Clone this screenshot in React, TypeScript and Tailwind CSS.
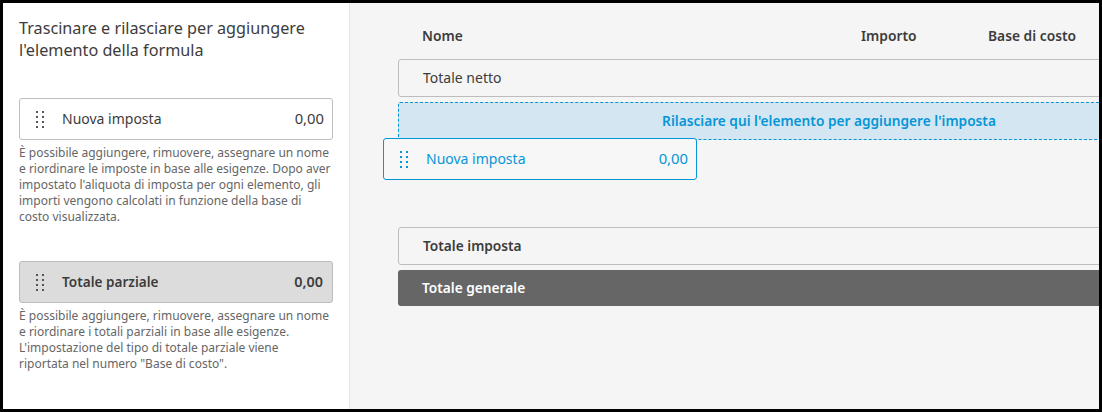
const font = "font-['Noto_Sans','Open_Sans',sans-serif]";

const Grip = ({ className }: { className: string }) => (
  <svg width="9" height="17" viewBox="0 0 9 17" className={className} fill="currentColor">
    <rect x="0" y="0" width="2" height="2" />
    <rect x="6" y="0" width="2" height="2" />
    <rect x="0" y="5" width="2" height="2" />
    <rect x="6" y="5" width="2" height="2" />
    <rect x="0" y="10" width="2" height="2" />
    <rect x="6" y="10" width="2" height="2" />
    <rect x="0" y="15" width="2" height="2" />
    <rect x="6" y="15" width="2" height="2" />
  </svg>
);

const App = () => {
  return (
    <div className={`${font} flex h-[412px] w-[1102px] overflow-hidden border-[3px] border-black bg-[#f5f5f5] text-[#3c3c3c]`}>
      <div className="w-[347px] shrink-0 border-r border-[#e5e5e5] bg-white pl-4 pr-4">
        <h2 className="mt-[14px] h-[81px] w-[300px] text-[16.2px] leading-[22px] text-[#3c3c3c]">
          Trascinare e rilasciare per aggiungere l'elemento della formula
        </h2>
        <div className="flex h-[42px] w-[314px] items-center rounded-[3px] border border-[#bdbdbd] bg-white pl-4 pr-2">
          <Grip className="mr-[17px] text-[#555]" />
          <span className="flex-1 pb-px text-[14px]">Nuova imposta</span>
          <span className="pb-px text-[14.8px]">0,00</span>
        </div>
        <p className="mt-[5px] w-[314px] text-[12px] leading-4 text-[#666]">
          È possibile aggiungere, rimuovere, assegnare un nome e riordinare le imposte in base alle esigenze. Dopo aver
          impostato l'aliquota di imposta per ogni elemento, gli importi vengono calcolati in funzione della base di
          costo visualizzata.
        </p>
        <div className="mt-[36px] flex h-[42px] w-[314px] items-center rounded-[3px] border border-[#bdbdbd] bg-[#dcdcdc] pl-4 pr-[9px]">
          <Grip className="mr-[17px] text-[#555]" />
          <span className="flex-1 text-[13.6px] font-semibold">Totale parziale</span>
          <span className="text-[14.4px] font-semibold">0,00</span>
        </div>
        <p className="mt-[5px] w-[312px] text-[12px] leading-4 text-[#666]">
          È possibile aggiungere, rimuovere, assegnare un nome e riordinare i totali parziali in base alle esigenze.
          L'impostazione del tipo di totale parziale viene riportata nel numero "Base di costo".
        </p>
      </div>

      <div className="relative flex-1 overflow-hidden pl-12">
        <div className="flex h-[56px] w-[800px] items-center pt-[10px] text-[13.8px] font-semibold">
          <span className="ml-6 w-[439px]">Nome</span>
          <span className="w-[127px]">Importo</span>
          <span>Base di costo</span>
        </div>
        <div className="flex h-[38px] w-[800px] items-center rounded-[3px] border border-[#bdbdbd] pb-px pl-6 text-[14px]">
          Totale netto
        </div>
        <div className="mt-[5px] flex h-[38px] w-[702px] items-center justify-center rounded-l-[2px] border border-dashed border-[#0696d7] bg-[#d3e6f1] pt-px text-[13.7px] font-semibold text-[#0696d7]">
          <span className="ml-[160px]">Rilasciare qui l'elemento per aggiungere l'imposta</span>
        </div>
        <div className="absolute left-[33px] top-[135px] flex h-[42px] w-[314px] items-center rounded-[3px] border border-[#0696d7] bg-[#f7f7f7] pl-4 pr-2 text-[#0696d7]">
          <Grip className="mr-[17px]" />
          <span className="flex-1 pb-px text-[14px]">Nuova imposta</span>
          <span className="pb-px text-[14.8px]">0,00</span>
        </div>
        <div className="mt-[87px] flex h-[38px] w-[800px] items-center rounded-[3px] border border-[#bdbdbd] pl-6 text-[13.7px] font-semibold">
          Totale imposta
        </div>
        <div className="mt-[5px] flex h-[36px] w-[800px] items-center rounded-[3px] bg-[#666666] pl-6 text-[13.7px] font-semibold text-white">
          Totale generale
        </div>
      </div>
    </div>
  );
};

export default App;
